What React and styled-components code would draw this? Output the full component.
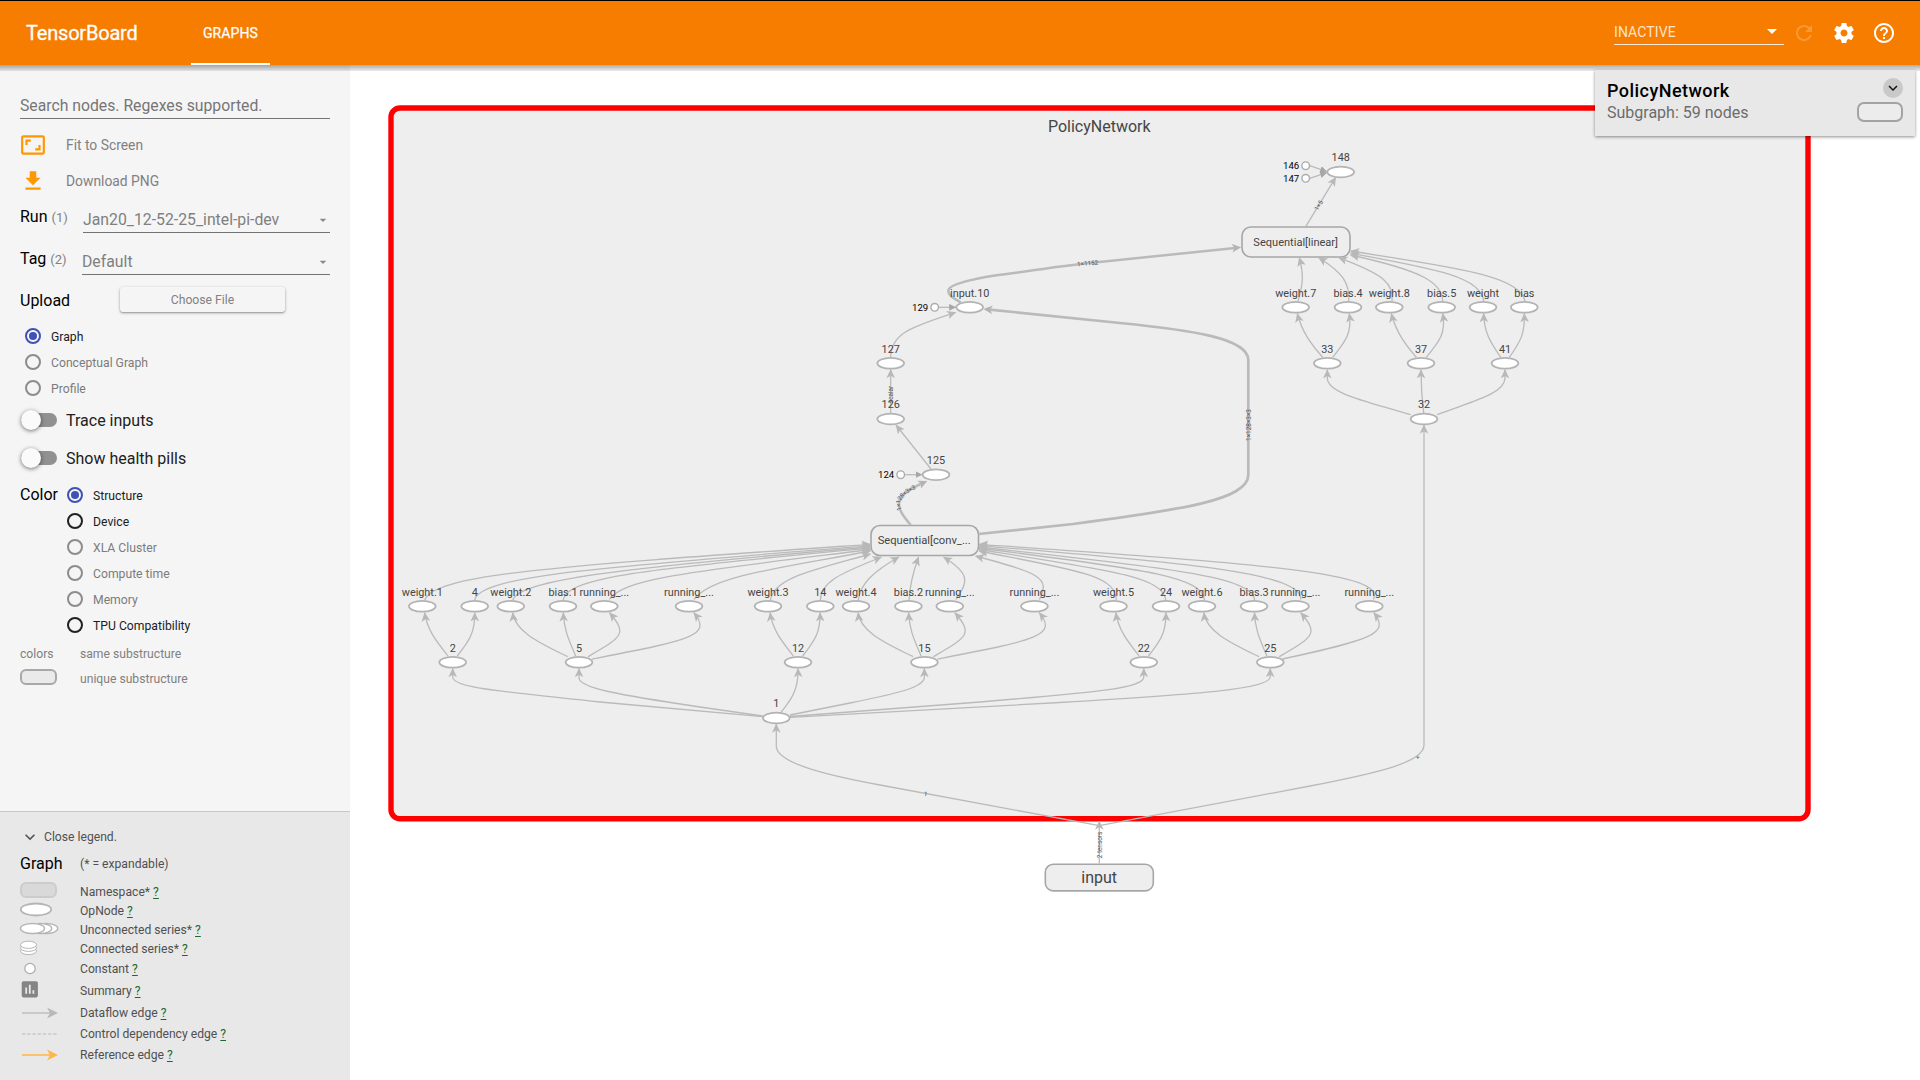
import React from 'react';
import styled, { createGlobalStyle, css } from 'styled-components';

const GlobalStyle = createGlobalStyle`
  * { box-sizing: border-box; }
  html, body { margin: 0; padding: 0; overflow: hidden; }
  body { font-family: Roboto, "Noto Sans", sans-serif; background: #fff; }
`;

/* ---------- icons ---------- */

const ICONS = {
  refresh:
    'M17.65 6.35C16.2 4.9 14.21 4 12 4c-4.42 0-7.99 3.58-7.99 8s3.57 8 7.99 8c3.73 0 6.84-2.55 7.73-6h-2.08c-.82 2.33-3.04 4-5.65 4-3.31 0-6-2.69-6-6s2.69-6 6-6c1.66 0 3.14.69 4.22 1.78L13 11h7V4l-2.35 2.35z',
  settings:
    'M19.43 12.98c.04-.32.07-.64.07-.98s-.03-.66-.07-.98l2.11-1.65c.19-.15.24-.42.12-.64l-2-3.46c-.12-.22-.39-.3-.61-.22l-2.49 1c-.52-.4-1.08-.73-1.69-.98l-.38-2.65C14.46 2.18 14.25 2 14 2h-4c-.25 0-.46.18-.49.42l-.38 2.65c-.61.25-1.17.59-1.69.98l-2.49-1c-.23-.09-.49 0-.61.22l-2 3.46c-.13.22-.07.49.12.64l2.11 1.65c-.04.32-.07.65-.07.98s.03.66.07.98l-2.11 1.65c-.19.15-.24.42-.12.64l2 3.46c.12.22.39.3.61.22l2.49-1c.52.4 1.08.73 1.69.98l.38 2.65c.03.24.24.42.49.42h4c.25 0 .46-.18.49-.42l.38-2.65c.61-.25 1.17-.59 1.69-.98l2.49 1c.23.09.49 0 .61-.22l2-3.46c.12-.22.07-.49-.12-.64l-2.11-1.65zM12 15.5c-1.93 0-3.5-1.57-3.5-3.5s1.57-3.5 3.5-3.5 3.5 1.57 3.5 3.5-1.57 3.5-3.5 3.5z',
  help:
    'M11 18h2v-2h-2v2zm1-16C6.48 2 2 6.48 2 12s4.48 10 10 10 10-4.48 10-10S17.52 2 12 2zm0 18c-4.41 0-8-3.59-8-8s3.59-8 8-8 8 3.59 8 8-3.59 8-8 8zm0-14c-2.21 0-4 1.79-4 4h2c0-1.1.9-2 2-2s2 .9 2 2c0 2-3 1.75-3 5h2c0-2.25 3-2.5 3-5 0-2.21-1.79-4-4-4z',
  aspect:
    'M19 12h-2v3h-3v2h5v-5zM7 9h3V7H5v5h2V9zm14-6H3c-1.1 0-2 .9-2 2v14c0 1.1.9 2 2 2h18c1.1 0 2-.9 2-2V5c0-1.1-.9-2-2-2zm0 16.01H3V4.99h18v14.02z',
  download: 'M19 9h-4V3H9v6H5l7 7 7-7zM5 18v2h14v-2H5z',
  dropdown: 'M7 10l5 5 5-5z',
  expand: 'M16.59 8.59L12 13.17 7.41 8.59 6 10l6 6 6-6z',
  summary:
    'M19 3H5c-1.1 0-2 .9-2 2v14c0 1.1.9 2 2 2h14c1.1 0 2-.9 2-2V5c0-1.1-.9-2-2-2zM9 17H7v-7h2v7zm4 0h-2V7h2v10zm4 0h-2v-4h2v4z',
};

const IconSvg = styled.svg`
  display: block;
  flex: none;
  width: ${(p) => p.$size}px;
  height: ${(p) => p.$size}px;
  fill: ${(p) => p.$color};
`;

const Icon = ({ name, size = 24, color = '#fff' }) => (
  <IconSvg viewBox="0 0 24 24" $size={size} $color={color}>
    <path d={ICONS[name]} />
  </IconSvg>
);

/* ---------- page frame ---------- */

const Page = styled.div`
  display: flex;
  flex-direction: column;
  width: 1920px;
  height: 1080px;
`;

const Header = styled.header`
  display: flex;
  align-items: stretch;
  height: 65px;
  flex: none;
  background: #f77d00;
  border-top: 1px solid #000;
  color: #fff;
`;

const Brand = styled.div`
  width: 191px;
  padding-left: 26px;
  display: flex;
  align-items: center;
  font-size: 20px;
  font-weight: 400;
  -webkit-text-stroke: 0.3px #fff;
  letter-spacing: -0.2px;
`;

const Tab = styled.div`
  width: 79px;
  display: flex;
  align-items: center;
  justify-content: center;
  font-size: 14px;
  font-weight: 400;
  -webkit-text-stroke: 0.25px #fff;
  letter-spacing: 0.1px;
  border-bottom: 2px solid #fff;
  padding-top: 1px;
`;

const HeaderTools = styled.div`
  margin-left: auto;
  display: flex;
  align-items: center;
  padding-right: 24px;
`;

const StatusSelect = styled.div`
  width: 170px;
  height: 28px;
  display: flex;
  align-items: center;
  justify-content: space-between;
  border-bottom: 1px solid rgba(255, 255, 255, 0.85);
  font-size: 14px;
  letter-spacing: 0.1px;
  color: rgba(255, 255, 255, 0.8);
  margin-right: 8px;
  margin-bottom: 4px;
  span { padding-top: 2px; }
`;

const ToolButton = styled.div`
  width: 24px;
  height: 24px;
  margin-right: ${(p) => p.$gap || 0}px;
  opacity: ${(p) => (p.$disabled ? 0.22 : 1)};
`;

const Body = styled.div`
  display: flex;
  flex: 1;
  min-height: 0;
`;

const ShadowStrip = styled.div`
  height: 6px;
  flex: none;
  margin-bottom: -6px;
  position: relative;
  background: linear-gradient(rgba(0, 0, 0, 0.33), rgba(0, 0, 0, 0.08));
`;

/* ---------- sidebar ---------- */

const Sidebar = styled.aside`
  width: 350px;
  flex: none;
  display: flex;
  flex-direction: column;
  background: #f5f5f5;
`;

const Controls = styled.div`
  display: flex;
  flex-direction: column;
  padding: 29px 20px 0;
`;

const SearchField = styled.div`
  height: 25px;
  line-height: 23px;
  font-size: 15.75px;
  color: #757575;
  border-bottom: 1px solid #737373;
  margin-bottom: 8px;
`;

const ActionRow = styled.div`
  height: 36px;
  display: flex;
  align-items: center;
  gap: 20px;
  font-size: 13.85px;
  color: #818181;
`;

const SelectRow = styled.div`
  display: flex;
  height: 34px;
  margin-bottom: 8px;
`;

const SelectLabel = styled.div`
  width: ${(p) => p.$width}px;
  flex: none;
  font-size: 16px;
  line-height: 36px;
  span {
    font-size: 13px;
    color: #818181;
  }
`;

const SelectValue = styled.div`
  flex: 1;
  display: flex;
  align-items: center;
  justify-content: space-between;
  border-bottom: 1px solid #737373;
  padding: 8px 0 0;
  font-size: 15.8px;
  color: #808080;
`;

const ArrowSlot = styled.div`
  margin-right: -1px;
`;

const UploadRow = styled.div`
  display: flex;
  align-items: center;
  height: 25px;
  margin: 4px 0 11px;
`;

const Heading = styled.div`
  width: ${(p) => p.$width || 100}px;
  flex: none;
  font-size: 16px;
  line-height: 26px;
  padding-top: ${(p) => p.$drop || 0}px;
  color: #000;
`;

const FileButton = styled.div`
  width: 165px;
  height: 25px;
  border-radius: 3px;
  display: flex;
  align-items: center;
  justify-content: center;
  font-size: 12.2px;
  color: #818181;
  box-shadow: 0 1px 3px rgba(0, 0, 0, 0.35), 0 1px 1px rgba(0, 0, 0, 0.12);
`;

const RadioList = styled.div`
  display: flex;
  flex-direction: column;
  padding-left: ${(p) => p.$indent}px;
`;

const RadioRow = styled.div`
  height: 26px;
  display: flex;
  align-items: center;
  gap: 10px;
  font-size: 12.2px;
  color: ${(p) => (p.$dim ? '#7c7c7c' : '#1c1c1c')};
  span { padding-top: 1px; }
`;

const Ring = styled.i`
  width: 16px;
  height: 16px;
  border-radius: 50%;
  border: 2px solid ${(p) => p.$color};
  display: flex;
  align-items: center;
  justify-content: center;
  ${(p) =>
    p.$on &&
    css`
      &::after {
        content: '';
        width: 8px;
        height: 8px;
        border-radius: 50%;
        background: ${p.$color};
      }
    `}
`;

const ToggleRow = styled.div`
  height: 38px;
  display: flex;
  align-items: center;
  gap: 9px;
  font-size: 16px;
  color: #212121;
`;

const Track = styled.div`
  width: 36px;
  height: 14px;
  margin-left: 1px;
  border-radius: 7px;
  background: #919191;
  display: flex;
  align-items: center;
`;

const Knob = styled.div`
  width: 20px;
  height: 20px;
  border-radius: 50%;
  background: #fafafa;
  box-shadow: 0 1px 4px rgba(0, 0, 0, 0.55);
`;

const ColorBlock = styled.div`
  display: flex;
  padding-top: 5px;
`;

const SubstructureRow = styled.div`
  height: ${(p) => p.$height}px;
  display: flex;
  align-items: center;
  font-size: 12.15px;
  color: #808080;
`;

const SwatchSlot = styled.div`
  width: 60px;
  flex: none;
`;

const Pill = styled.div`
  width: ${(p) => p.$w}px;
  height: ${(p) => p.$h}px;
  border: 2px solid ${(p) => p.$stroke};
  border-radius: ${(p) => p.$r || 6}px;
  background: ${(p) => p.$fill};
  margin-bottom: ${(p) => p.$lift || 0}px;
`;

const Legend = styled.div`
  margin-top: auto;
  height: 269px;
  background: #e8e8e8;
  border-top: 1px solid #c8c8c8;
  padding: 12px 20px 0;
  color: #505050;
  font-size: 12.15px;
`;

const LegendToggle = styled.div`
  height: 26px;
  display: flex;
  align-items: center;
  gap: 4px;
`;

const LegendHead = styled.div`
  height: 28px;
  display: flex;
  align-items: center;
`;

const LegendRow = styled.div`
  height: ${(p) => p.$height}px;
  padding-top: ${(p) => p.$drop || 0}px;
  display: flex;
  align-items: center;
`;

const HelpLink = styled.a`
  color: #1b6a2b;
  text-decoration: underline;
  text-underline-offset: 2px;
`;

const LegendDrawing = styled.svg`
  display: block;
  overflow: visible;
`;

const LEGEND = [
  { key: 'ns', label: 'Namespace*', height: 23, drop: 4 },
  { key: 'op', label: 'OpNode', height: 19 },
  { key: 'us', label: 'Unconnected series*', height: 19 },
  { key: 'cs', label: 'Connected series*', height: 19 },
  { key: 'const', label: 'Constant', height: 21 },
  { key: 'sum', label: 'Summary', height: 23 },
  { key: 'data', label: 'Dataflow edge', height: 21 },
  { key: 'ctrl', label: 'Control dependency edge', height: 21 },
  { key: 'ref', label: 'Reference edge', height: 21 },
];

const outline = { fill: '#fff', stroke: '#b5b5b5' };

const GLYPHS = {
  ns: <rect x="1" y="-8" width="35" height="14" rx="5" fill="#d9d9d9" stroke="#ccc" strokeWidth="2" />,
  op: <ellipse cx="16" cy="-0.5" rx="15.2" ry="6" strokeWidth="1.8" {...outline} />,
  us: (
    <g strokeWidth="1.4" {...outline}>
      <ellipse cx="26" cy="-0.5" rx="11.7" ry="5" />
      <ellipse cx="20" cy="-0.5" rx="11.7" ry="5" />
      <ellipse cx="12.5" cy="-0.5" rx="12" ry="5" />
    </g>
  ),
  cs: (
    <g strokeWidth="1" {...outline}>
      <ellipse cx="8.5" cy="3" rx="8" ry="3.6" />
      <ellipse cx="8.5" cy="-0.2" rx="8" ry="3.6" />
      <ellipse cx="8.5" cy="-3.2" rx="8" ry="3.6" />
    </g>
  ),
  const: <circle cx="10" cy="0.5" r="5.2" fill="#fff" stroke="#aaa" strokeWidth="1.2" />,
  sum: (
    <g transform="translate(-1 -11.5) scale(.9)" fill="#848484">
      <path d={ICONS.summary} />
    </g>
  ),
  data: (
    <g stroke="#b9b9b9" fill="#b9b9b9">
      <path d="M2 1H30" strokeWidth="1.3" />
      <path d="M27 -4.5L38 1L27 6.5L30 1Z" stroke="none" />
    </g>
  ),
  ctrl: <path d="M2 1H38" stroke="#b9b9b9" strokeWidth="1.2" strokeDasharray="3.4 1.8" />,
  ref: (
    <g stroke="#ffb74d" fill="#ffb74d">
      <path d="M2 1H30" strokeWidth="1.6" />
      <path d="M27 -4.5L38 1L27 6.5L30 1Z" stroke="none" />
    </g>
  ),
};

/* ---------- graph canvas ---------- */

const Stage = styled.main`
  flex: 1;
  display: grid;
  background: #fff;
`;

const Canvas = styled.svg`
  grid-area: 1 / 1;
  display: block;
  width: 1570px;
  height: 1015px;
  font-family: Roboto, "Noto Sans", sans-serif;
`;

const Edge = styled.path`
  fill: none;
  stroke: #bababa;
  stroke-width: ${(p) => p.$w || 1.3}px;
`;

const OpShape = styled.ellipse`
  fill: #fff;
  stroke: #b3b3b3;
  stroke-width: 1.7px;
`;

const ConstShape = styled.circle`
  fill: #fff;
  stroke: #acacac;
  stroke-width: 1.4px;
`;

const GroupShape = styled.rect`
  fill: #eee;
  stroke: #a6a6a6;
  stroke-width: 1.6px;
`;

const RootShape = styled.rect`
  fill: #eee;
  stroke: #f00;
  stroke-width: 5.4px;
`;

const NodeText = styled.text`
  font-size: ${(p) => p.$size || 10.85}px;
  fill: #454545;
  text-anchor: middle;
`;

const ConstText = styled.text`
  font-size: 9.6px;
  fill: #000;
  text-anchor: end;
`;

const ShapeText = styled.text`
  font-size: 6.4px;
  fill: #555;
  text-anchor: middle;
`;

const OPS = [
  [1340.7, 172, '148', 161],
  [1295.7, 307.3, 'weight.7', 297],
  [1348, 307.3, 'bias.4', 297],
  [1389.3, 307.3, 'weight.8', 297],
  [1441.7, 307.3, 'bias.5', 297],
  [1483, 307.3, 'weight', 297],
  [1524.3, 307.3, 'bias', 297],
  [1327.3, 363.3, '33', 353],
  [1421, 363.3, '37', 353],
  [1505, 363.3, '41', 353],
  [1424, 419, '32', 408],
  [969.7, 307.3, 'input.10', 297],
  [890.7, 363.3, '127', 353],
  [890.7, 419, '126', 408],
  [936, 474.7, '125', 464],
  [422.3, 606.3, 'weight.1', 596],
  [474.7, 606.3, '4', 596],
  [510.8, 606.3, 'weight.2', 596],
  [563, 606.3, 'bias.1', 596],
  [604.3, 606.3, 'running_...', 596],
  [689, 606.3, 'running_...', 596],
  [768, 606.3, 'weight.3', 596],
  [820.3, 606.3, '14', 596],
  [856, 606.3, 'weight.4', 596],
  [908.4, 606.3, 'bias.2', 596],
  [949.8, 606.3, 'running_...', 596],
  [1034.4, 606.3, 'running_...', 596],
  [1113.5, 606.3, 'weight.5', 596],
  [1166, 606.3, '24', 596],
  [1202, 606.3, 'weight.6', 596],
  [1254, 606.3, 'bias.3', 596],
  [1295.5, 606.3, 'running_...', 596],
  [1369.3, 606.3, 'running_...', 596],
  [452.7, 662.3, '2', 652],
  [579, 662.3, '5', 652],
  [798, 662.3, '12', 652],
  [924.4, 662.3, '15', 652],
  [1143.8, 662.3, '22', 652],
  [1270.3, 662.3, '25', 652],
  [776.3, 718, '1', 707],
];

const CONSTS = [
  [1305.7, 165.7, '146', 1327, 171.6],
  [1305.7, 178.3, '147', 1327, 172.6],
  [934.7, 307.3, '129', 956, 307.3],
  [900.7, 474.7, '124', 922.3, 474.7],
];

const EDGES = [
  'M1305.7 226.7L1335.7 177.3',
  'M1298 301C1303 285 1304 275 1299.3 257.5',
  'M1348.7 301C1350 283 1342 272 1318.7 257.7',
  'M1392 301C1394 284 1385 275 1338.7 257.7',
  'M1442.7 301C1442 283 1424 271 1350.5 255',
  'M1483.7 301C1481 276 1430 268 1350.5 253.2',
  'M1525 301C1520 275 1450 267 1350.5 251',
  'M1322.7 357.3C1311 344 1302 332 1297.3 313.5',
  'M1332.7 357.3C1346 341 1352 333 1349.3 313.5',
  'M1416.3 357.3C1405 344 1396 332 1391.3 313.5',
  'M1426.3 357.3C1440 341 1446 333 1442.7 313.5',
  'M1500.7 357.3C1490 342 1484 332 1483.7 313.5',
  'M1509.3 357.3C1521 341 1525 333 1524.3 313.5',
  'M1410.7 414.7C1370 402 1327.3 394 1327.3 378V369.7',
  'M1423.7 413C1422 400 1421 385 1421 369.7',
  'M1437.3 414.7C1470 402 1505 394 1505 378V369.7',
  'M1099.3 825.7L1310 786C1380 772.5 1424 762 1424 745V425',
  'M1099.3 825.7L880 785C820 774 776.3 762 776.3 746V724',
  'M1099.3 863.5V821',
  'M931 469L896 425',
  'M890.7 413V369.5',
  'M890.7 357.3C890.7 332 915 326 955.7 312.3',
  'M424.7 600.3C432 574 560 566 870.5 544.3',
  'M474.7 600.3C478 576 600 567 870.5 545.8',
  'M512.7 600.3C518 580 620 568 870.5 547',
  'M563.3 600.3C566 576 660 568 870.5 548',
  'M609.3 599.3C625 578 690 572 870.5 549.5',
  'M694 599.3C712 576 770 570 870.5 551',
  'M770.3 600.3C774 578 810 571 870.5 554',
  'M820.3 600.3C821 580 845 572 881.5 557',
  'M858.3 600.3C860 585 872 572 899 557',
  'M909 600C910 585 913 572 918.6 557',
  'M955.8 599.5C968 582 971 574 943.5 557',
  'M1039.4 599.5C1050 578 1042 574 975.5 556',
  'M1116.3 600C1116 575 1075 570 979 551',
  'M1165.8 600C1163 577 1110 570 979 549.5',
  'M1204.4 600C1203 575 1130 568 979 548',
  'M1254.6 600C1253 576 1160 567 979 547',
  'M1300.8 599.5C1302 573 1190 563 979 545.6',
  'M1373.5 599.5C1386 572 1260 564 979 544.3',
  'M762.7 716.7L600 702C500 691 452.7 688 452.7 677V668.5',
  'M762.7 716L700 707C620 695 579 688 579 678V668.5',
  'M781 712.3C793 698 798.5 688 798 668.5',
  'M790 715L850 703C900 693 924.4 687 924.4 677V668.5',
  'M790 716.5L980 702C1100 692 1143.8 688 1143.8 677V668.5',
  'M790 717.3L1060 702.5C1200 694 1270.2 689 1270.2 677V668.5',
  'M1282.5 659C1370 640 1391 634 1373.8 612.7',
];

/* The layer-parameter fans repeat for every convolution block. */
const FAN_SMALL = [
  'M448 656C437 642 427 630 424.7 612.7',
  'M457.3 656C470 640 475 632 474.7 612.7',
];
const FAN_LARGE = [
  'M567.7 656.7C540 643 515 632 512.7 612.7',
  'M575.7 656C567 636 564 628 563.3 612.7',
  'M588 656.7C622 637 628 634 609.5 612.7',
];
const FAN_TAIL = 'M592.3 659C690 640 713 636 693.8 612.7';

const Graph = () => (
  <Canvas viewBox="350 65 1570 1015">
    <defs>
      <marker id="arrow" viewBox="0 0 10 10" refX="9.5" refY="5" markerWidth="9.2" markerHeight="9.2" markerUnits="userSpaceOnUse" orient="auto">
        <path d="M0 0.3L10 5L0 9.7L2.6 5Z" fill="#b8b8b8" />
      </marker>
      <marker id="arrowBold" viewBox="0 0 10 10" refX="6" refY="5" markerWidth="9.2" markerHeight="9.2" markerUnits="userSpaceOnUse" orient="auto">
        <path d="M0 0.3L10 5L0 9.7L2.6 5Z" fill="#b4b4b4" />
      </marker>
      <marker id="arrowConst" viewBox="0 0 10 10" refX="10" refY="5" markerWidth="6.8" markerHeight="6.8" markerUnits="userSpaceOnUse" orient="auto">
        <path d="M0 0L10 5L0 10Z" fill="#a6a6a6" />
      </marker>
      <path id="convOut" d="M908.5 522C900 513 895 504 901 497C908 488 915 489 928 480" />
    </defs>

    <RootShape x="391" y="108" width="1417" height="710.8" rx="9" />
    <NodeText x="1099.3" y="132" $size={16}>PolicyNetwork</NodeText>

    <GroupShape x="1242" y="227" width="108" height="30" rx="9" />
    <GroupShape x="871" y="525.5" width="107.5" height="30" rx="9" />
    <GroupShape x="1045.3" y="864.3" width="108" height="26.6" rx="8" />

    {EDGES.map((d) => (
      <Edge key={d} d={d} markerEnd="url(#arrow)" />
    ))}
    {[0, 345.4, 691.2].map((dx) => (
      <g key={dx} transform={`translate(${dx} 0)`}>
        {[...FAN_SMALL, ...FAN_LARGE].map((d) => (
          <Edge key={d} d={d} markerEnd="url(#arrow)" />
        ))}
        {dx < 600 && <Edge d={FAN_TAIL} markerEnd="url(#arrow)" />}
      </g>
    ))}
    <Edge $w={2.5} d="M960.7 302.3C952 297.5 948 295 948.3 290.5C949 283 985 276.5 1006.7 274C1040 269.5 1060 266.3 1087.3 263.3L1237.5 247.7" markerEnd="url(#arrowBold)" />
    <Edge $w={2.7} d="M978.7 534L1073 524C1180 510 1248.3 500 1248.3 475V360C1248.3 338 1190 330 1120 323L987 309.3" markerEnd="url(#arrowBold)" />
    <Edge $w={2.5} d="M910.7 525C903 516 897 508 899.5 500C902 493 912 488 924 482.5" markerEnd="url(#arrowBold)" />

    {CONSTS.map(([x, y, name, tx, ty]) => (
      <g key={name}>
        <Edge d={`M${x + 4} ${y}L${tx} ${ty}`} markerEnd="url(#arrowConst)" />
        <ConstShape cx={x} cy={y} r="3.8" />
        <ConstText x={x - 6.5} y={y + 3.4}>{name}</ConstText>
      </g>
    ))}
    {OPS.map(([x, y, name, ly]) => (
      <g key={`${name}${x}`}>
        <OpShape cx={x} cy={y} rx="13.4" ry="5.4" />
        <NodeText x={x} y={ly}>{name}</NodeText>
      </g>
    ))}

    <NodeText x="1295.7" y="246" $size={11.05}>Sequential[linear]</NodeText>
    <NodeText x="924.2" y="544" $size={11.2}>Sequential[conv_...</NodeText>
    <NodeText x="1099.2" y="883" $size={16}>input</NodeText>

    <ShapeText transform="translate(1320.5 206.5) rotate(-59)">1×5</ShapeText>
    <ShapeText transform="translate(1087.8 265.5) rotate(-5)">1×1152</ShapeText>
    <ShapeText transform="translate(1250.6 425) rotate(-90)">1×128×3×3</ShapeText>
    <ShapeText transform="translate(893 394.5) rotate(-90)">scalar</ShapeText>
    <ShapeText transform="translate(1101.6 845) rotate(-90)">2 tensors</ShapeText>
    <ShapeText transform="translate(925.3 796) rotate(10)">1</ShapeText>
    <ShapeText transform="translate(1419 759) rotate(-38)">×</ShapeText>
    <ShapeText dy="2">
      <textPath href="#convOut" startOffset="50%">1×128×3×3</textPath>
    </ShapeText>
  </Canvas>
);

const InfoCard = styled.section`
  grid-area: 1 / 1;
  justify-self: end;
  position: relative;
  width: 320px;
  height: 66px;
  margin: 5px 5px 0 0;
  padding: 10px 12px 0 12px;
  background: #e8e8e8;
  box-shadow: 0 1px 3px rgba(0, 0, 0, 0.45);
  display: flex;
  justify-content: space-between;
`;

const InfoTitle = styled.div`
  font-size: 18px;
  font-weight: 500;
  letter-spacing: 0.45px;
  line-height: 22px;
  color: #000;
`;

const InfoSub = styled.div`
  font-size: 16px;
  line-height: 20px;
  padding-top: 1px;
  color: #6c6c6c;
`;

const InfoSide = styled.div`
  display: flex;
  flex-direction: column;
  align-items: flex-end;
  gap: 4px;
  margin-top: -2px;
`;

const CollapseButton = styled.div`
  width: 20px;
  height: 20px;
  border-radius: 50%;
  background: #c9c9c9;
  display: flex;
  align-items: center;
  justify-content: center;
`;

const Radio = ({ label, on, dim }) => (
  <RadioRow $dim={dim}>
    <Ring $on={on} $color={on ? '#3f51b5' : dim ? '#8c8c8c' : '#212121'} />
    <span>{label}</span>
  </RadioRow>
);

export default function App() {
  return (
    <Page>
      <GlobalStyle />
      <Header>
        <Brand>TensorBoard</Brand>
        <Tab>GRAPHS</Tab>
        <HeaderTools>
          <StatusSelect>
            <span>INACTIVE</span>
            <Icon name="dropdown" />
          </StatusSelect>
          <ToolButton $gap={16} $disabled><Icon name="refresh" /></ToolButton>
          <ToolButton $gap={16}><Icon name="settings" /></ToolButton>
          <ToolButton><Icon name="help" /></ToolButton>
        </HeaderTools>
      </Header>
      <ShadowStrip />
      <Body>
        <Sidebar>
          <Controls>
            <SearchField>Search nodes. Regexes supported.</SearchField>
            <ActionRow><Icon name="aspect" size={26} color="#ff9800" />Fit to Screen</ActionRow>
            <ActionRow><Icon name="download" size={26} color="#ff9800" />Download PNG</ActionRow>
            <SelectRow>
              <SelectLabel $width={63}>Run <span>(1)</span></SelectLabel>
              <SelectValue>
                Jan20_12-52-25_intel-pi-dev
                <ArrowSlot><Icon name="dropdown" size={16} color="#8a8a8a" /></ArrowSlot>
              </SelectValue>
            </SelectRow>
            <SelectRow>
              <SelectLabel $width={62}>Tag <span>(2)</span></SelectLabel>
              <SelectValue>
                Default
                <ArrowSlot><Icon name="dropdown" size={16} color="#8a8a8a" /></ArrowSlot>
              </SelectValue>
            </SelectRow>
            <UploadRow>
              <Heading $drop={2}>Upload</Heading>
              <FileButton>Choose File</FileButton>
            </UploadRow>
            <RadioList $indent={5}>
              <Radio label="Graph" on />
              <Radio label="Conceptual Graph" dim />
              <Radio label="Profile" dim />
            </RadioList>
            <ToggleRow><Track><Knob /></Track>Trace inputs</ToggleRow>
            <ToggleRow><Track><Knob /></Track>Show health pills</ToggleRow>
            <ColorBlock>
              <Heading $width={47}>Color</Heading>
              <RadioList $indent={0}>
                <Radio label="Structure" on />
                <Radio label="Device" />
                <Radio label="XLA Cluster" dim />
                <Radio label="Compute time" dim />
                <Radio label="Memory" dim />
                <Radio label="TPU Compatibility" />
              </RadioList>
            </ColorBlock>
            <SubstructureRow $height={31}><SwatchSlot>colors</SwatchSlot>same substructure</SubstructureRow>
            <SubstructureRow $height={19}>
              <SwatchSlot><Pill $w={37} $h={16} $stroke="#a8a8a8" $fill="#eaeaea" $lift={3} /></SwatchSlot>
              unique substructure
            </SubstructureRow>
          </Controls>
          <Legend>
            <LegendToggle><Icon name="expand" size={20} color="#555" />Close legend.</LegendToggle>
            <LegendHead><Heading $width={60}>Graph</Heading>(* = expandable)</LegendHead>
            {LEGEND.map((row) => (
              <LegendRow key={row.key} $height={row.height} $drop={row.drop}>
                <SwatchSlot>
                  <LegendDrawing width="38" height="1" viewBox="0 0 38 1">{GLYPHS[row.key]}</LegendDrawing>
                </SwatchSlot>
                <span>{row.label} <HelpLink>?</HelpLink></span>
              </LegendRow>
            ))}
          </Legend>
        </Sidebar>
        <Stage>
          <Graph />
          <InfoCard>
            <div>
              <InfoTitle>PolicyNetwork</InfoTitle>
              <InfoSub>Subgraph: 59 nodes</InfoSub>
            </div>
            <InfoSide>
              <CollapseButton><Icon name="expand" size={18} color="#111" /></CollapseButton>
              <Pill $w={46} $h={20} $r={7} $stroke="#a3a3a3" $fill="#ececec" />
            </InfoSide>
          </InfoCard>
        </Stage>
      </Body>
    </Page>
  );
}
